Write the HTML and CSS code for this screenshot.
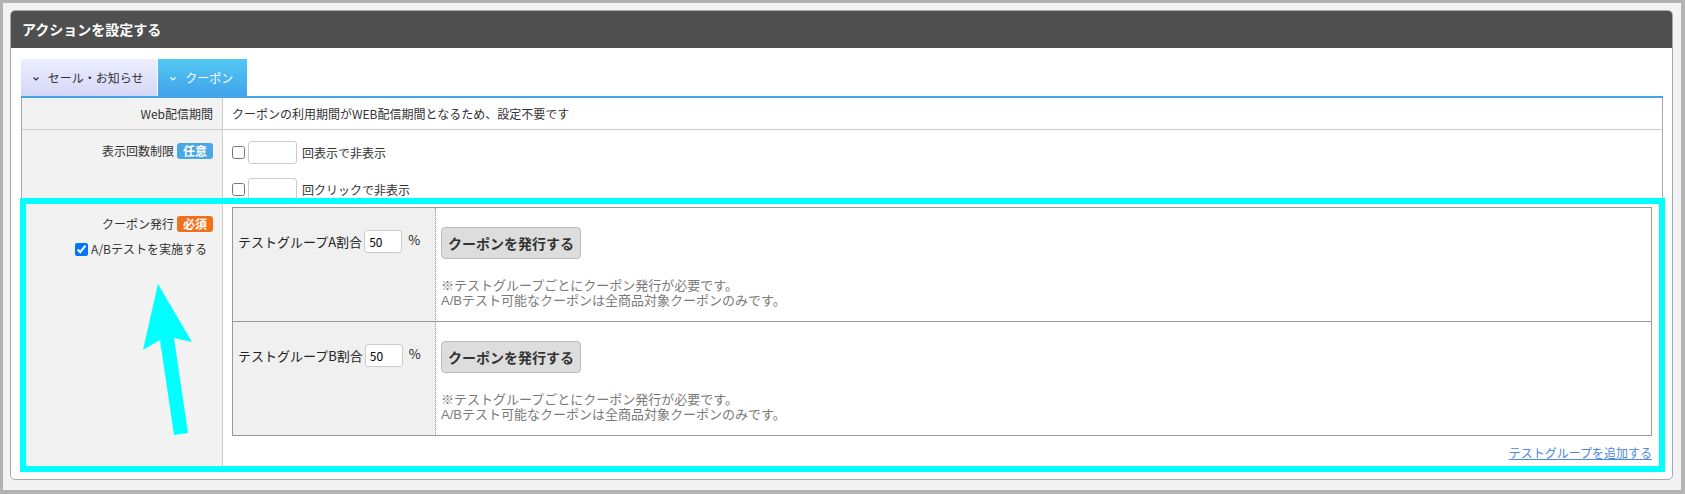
FILE: index.html
```html
<!DOCTYPE html>
<html lang="ja">
<head>
    <meta charset="UTF-8">
    <meta name="viewport" content="width=device-width, initial-scale=1.0">
    <title>アクションを設定する</title>
    <link rel="stylesheet" href="styles.css">
</head>
<body>
    <div class="screen">
        <div class="panel">
            <div class="panel-title">アクションを設定する</div>
            <div class="panel-body">
                <!-- Tabs -->
                <div class="tabs">
                    <div class="tab">
                        <svg class="chevron" width="6" height="4" viewBox="0 0 6 4"><polyline points="0.5,0.5 3,3 5.5,0.5" fill="none" stroke="#333" stroke-width="1.2"/></svg>
                        セール・お知らせ
                    </div>
                    <div class="tab active">
                        <svg class="chevron" width="6" height="4" viewBox="0 0 6 4"><polyline points="0.5,0.5 3,3 5.5,0.5" fill="none" stroke="#fff" stroke-width="1.2"/></svg>
                        クーポン
                    </div>
                </div>

                <div class="form-table">
                    <div class="row row-web">
                        <div class="label">Web配信期間</div>
                        <div class="value">クーポンの利用期間がWEB配信期間となるため、設定不要です</div>
                    </div>

                    <div class="row row-limit">
                        <div class="label">表示回数制限<span class="badge optional">任意</span></div>
                        <div class="value">
                            <div class="limit-line">
                                <input type="checkbox" class="check">
                                <input type="text" class="count">
                                <span>回表示で非表示</span>
                            </div>
                            <div class="limit-line">
                                <input type="checkbox" class="check">
                                <input type="text" class="count">
                                <span>回クリックで非表示</span>
                            </div>
                        </div>
                    </div>

                    <div class="row row-coupon">
                        <div class="label">
                            <div>クーポン発行<span class="badge required">必須</span></div>
                            <label class="ab-check"><input type="checkbox" class="check" checked>A/Bテストを実施する</label>
                        </div>
                        <div class="value">
                            <div class="ab-table">
                                <div class="ab-group">
                                    テストグループA割合<input type="text" class="rate" value="50"><span class="pct">%</span>
                                </div>
                                <div class="ab-action">
                                    <button class="issue-button">クーポンを発行する</button>
                                    <p class="note">※テストグループごとにクーポン発行が必要です。<br>A/Bテスト可能なクーポンは全商品対象クーポンのみです。</p>
                                </div>
                                <div class="ab-group last">
                                    テストグループB割合<input type="text" class="rate" value="50"><span class="pct">%</span>
                                </div>
                                <div class="ab-action last">
                                    <button class="issue-button">クーポンを発行する</button>
                                    <p class="note">※テストグループごとにクーポン発行が必要です。<br>A/Bテスト可能なクーポンは全商品対象クーポンのみです。</p>
                                </div>
                            </div>
                            <div class="add-line"><a href="#" class="add-link">テストグループを追加する</a></div>
                        </div>
                    </div>
                </div>
            </div>
        </div>
    </div>

    <!-- annotation drawn over the screenshot -->
    <div class="highlight"></div>
    <svg class="arrow" width="1685" height="494" viewBox="0 0 1685 494">
        <polygon points="158,284 192,342 174,338 188,433 174,435 160,340 143,350" fill="#00ffff"/>
    </svg>
</body>
</html>
```

FILE: styles.css
```css
body {
    margin: 0;
    position: relative;
    font-family: "Noto Sans CJK JP", "Noto Sans", sans-serif;
    font-size: 12px;
    color: #333;
}
.screen {
    width: 1685px;
    height: 494px;
    box-sizing: border-box;
    border-style: solid;
    border-color: #b3b3b3;
    border-width: 3px 4px 4px 3px;
    padding: 7px 8px 10px 7px;
    background-color: #f3f3f3;
}
.panel {
    width: 1663px;
    height: 470px;
    box-sizing: border-box;
    border: 1px solid #aaa;
    border-radius: 5px;
    background-color: white;
    overflow: hidden;
}
.panel-title {
    height: 37px;
    line-height: 37px;
    padding-left: 11px;
    background-color: #4f4f4f;
    color: white;
    font-size: 14px;
    font-weight: bold;
}
.panel-body {
    padding: 11px 9px 10px 10px;
}
.tabs {
    display: flex;
    gap: 1px;
    border-bottom: 2px solid #45a5e8;
}
.tab {
    height: 37px;
    line-height: 37px;
    padding: 0 14px 0 12px;
    background: linear-gradient(#eeefff, #d4d6f6);
    color: #333;
}
.tab.active {
    background: linear-gradient(#52c8f4, #41a3ea);
    color: white;
}
.chevron {
    margin-right: 6px;
    vertical-align: 2px;
}
.form-table {
    border: 1px solid #aaa;
    border-top: none;
}
.row {
    display: grid;
    grid-template-columns: 201px 1fr;
    border-bottom: 1px solid #ccc;
}
.row:last-child {
    border-bottom: none;
}
.label {
    box-sizing: border-box;
    background-color: #f2f2f2;
    border-right: 1px solid #ccc;
    text-align: right;
    padding: 12px 9px 0 0;
    line-height: 16px;
}
.value {
    padding: 0 10px 0 9px;
    line-height: 16px;
}
.row-web {
    height: 31px;
}
.row-web .label,
.row-web .value {
    padding-top: 0;
    display: flex;
    align-items: center;
}
.row-web .label {
    justify-content: flex-end;
}
.row-limit .label {
    padding-top: 13px;
}
.row-limit .value {
    padding-top: 11px;
    padding-bottom: 2px;
}
.badge {
    display: inline-block;
    margin-left: 3px;
    padding: 0 6px;
    height: 16px;
    line-height: 16px;
    border-radius: 3px;
    color: white;
    font-weight: bold;
    vertical-align: top;
}
.badge.optional {
    background-color: #4aa8e6;
}
.badge.required {
    background-color: #f0711c;
}
.limit-line {
    display: flex;
    align-items: center;
    height: 23px;
}
.limit-line + .limit-line {
    margin-top: 14px;
}
.check {
    width: 13px;
    height: 13px;
    margin: 0;
}
.count {
    width: 49px;
    height: 23px;
    box-sizing: border-box;
    margin: 0 5px 0 3px;
    border: 1px solid #ccc;
    border-radius: 3px;
}
.ab-check {
    display: inline-flex;
    align-items: center;
    gap: 3px;
    margin-top: 9px;
    margin-right: 6px;
}
.row-coupon .value {
    padding-top: 3px;
    padding-bottom: 6px;
}
.ab-table {
    display: grid;
    grid-template-columns: 203px 1fr;
    border: 1px solid #999;
}
.ab-group {
    box-sizing: border-box;
    background-color: #f0f0f0;
    border-right: 1px dotted #999;
    border-bottom: 1px solid #999;
    padding: 22px 0 0 5px;
    font-size: 13px;
    line-height: 23px;
    color: #222;
}
.ab-action {
    border-bottom: 1px solid #999;
    padding: 19px 5px 13px 5px;
}
.ab-group.last,
.ab-action.last {
    border-bottom: none;
}
.rate {
    width: 38px;
    height: 23px;
    box-sizing: border-box;
    margin: 0 0 0 2px;
    padding: 0 4px;
    border: 1px solid #ccc;
    border-radius: 3px;
    font-family: inherit;
    font-size: 12px;
    vertical-align: top;
}
.pct {
    margin-left: 6px;
    vertical-align: top;
    line-height: 20px;
}
.issue-button {
    height: 32px;
    padding: 0 6px;
    background-color: #dddddd;
    border: 1px solid #bbb;
    border-radius: 4px;
    font-family: inherit;
    font-size: 14px;
    font-weight: bold;
    color: #333;
}
.note {
    margin: 19px 0 0 0;
    font-family: "Liberation Sans", "Noto Sans CJK JP", sans-serif;
    font-size: 13px;
    line-height: 15px;
    color: #7a7a7a;
}
.add-line {
    margin-top: 9px;
    text-align: right;
}
.add-link {
    color: #4f86e0;
}
.highlight {
    position: absolute;
    left: 20px;
    top: 198px;
    width: 1645px;
    height: 274px;
    box-sizing: border-box;
    border: 6px solid #00ffff;
}
.arrow {
    position: absolute;
    left: 0;
    top: 0;
}
```
